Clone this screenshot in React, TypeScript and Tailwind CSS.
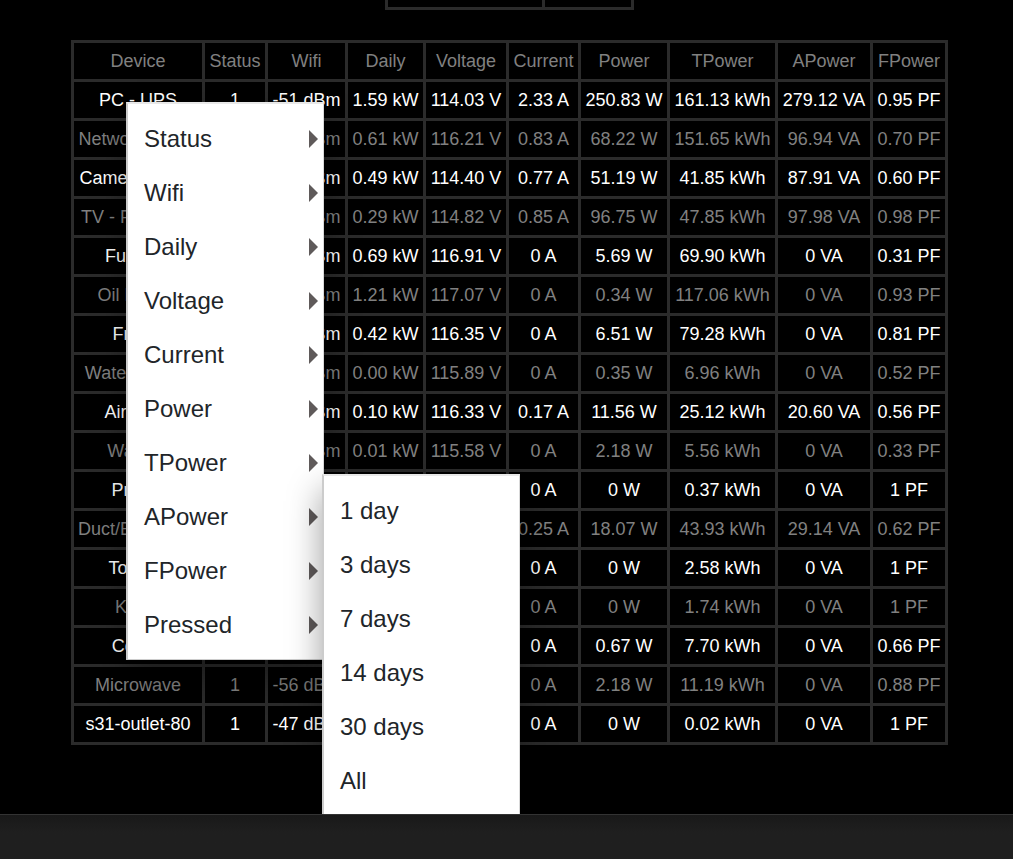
import React from "react";

type Row = string[];

const columns = [
  { name: "Device", width: "w-[131px]" },
  { name: "Status", width: "w-[63px]" },
  { name: "Wifi", width: "w-[80px]" },
  { name: "Daily", width: "w-[78px]" },
  { name: "Voltage", width: "w-[83px]" },
  { name: "Current", width: "w-[72px]" },
  { name: "Power", width: "w-[89px]" },
  { name: "TPower", width: "w-[108px]" },
  { name: "APower", width: "w-[95px]" },
  { name: "FPower", width: "w-[75px]" },
];

const rows: Row[] = [
  ["PC - UPS", "1", "-51 dBm", "1.59 kW", "114.03 V", "2.33 A", "250.83 W", "161.13 kWh", "279.12 VA", "0.95 PF"],
  ["Network - UPS", "", "-56 dBm", "0.61 kW", "116.21 V", "0.83 A", "68.22 W", "151.65 kWh", "96.94 VA", "0.70 PF"],
  ["Camera - UPS", "", "-56 dBm", "0.49 kW", "114.40 V", "0.77 A", "51.19 W", "41.85 kWh", "87.91 VA", "0.60 PF"],
  ["TV - Fire Stick", "", "-56 dBm", "0.29 kW", "114.82 V", "0.85 A", "96.75 W", "47.85 kWh", "97.98 VA", "0.98 PF"],
  ["Furnace", "", "-56 dBm", "0.69 kW", "116.91 V", "0 A", "5.69 W", "69.90 kWh", "0 VA", "0.31 PF"],
  ["Oil Burner", "", "-56 dBm", "1.21 kW", "117.07 V", "0 A", "0.34 W", "117.06 kWh", "0 VA", "0.93 PF"],
  ["Fridge", "", "-56 dBm", "0.42 kW", "116.35 V", "0 A", "6.51 W", "79.28 kWh", "0 VA", "0.81 PF"],
  ["Water Heater", "", "-56 dBm", "0.00 kW", "115.89 V", "0 A", "0.35 W", "6.96 kWh", "0 VA", "0.52 PF"],
  ["Air Filter", "", "-56 dBm", "0.10 kW", "116.33 V", "0.17 A", "11.56 W", "25.12 kWh", "20.60 VA", "0.56 PF"],
  ["Washer", "", "-56 dBm", "0.01 kW", "115.58 V", "0 A", "2.18 W", "5.56 kWh", "0 VA", "0.33 PF"],
  ["Printer", "", "", "", "", "0 A", "0 W", "0.37 kWh", "0 VA", "1 PF"],
  ["Duct/Bathroom", "", "", "", "", "0.25 A", "18.07 W", "43.93 kWh", "29.14 VA", "0.62 PF"],
  ["Toaster", "", "", "", "", "0 A", "0 W", "2.58 kWh", "0 VA", "1 PF"],
  ["Kettle", "", "", "", "", "0 A", "0 W", "1.74 kWh", "0 VA", "1 PF"],
  ["Coffee", "", "", "", "", "0 A", "0.67 W", "7.70 kWh", "0 VA", "0.66 PF"],
  ["Microwave", "1", "-56 dBm", "", "", "0 A", "2.18 W", "11.19 kWh", "0 VA", "0.88 PF"],
  ["s31-outlet-80", "1", "-47 dBm", "", "", "0 A", "0 W", "0.02 kWh", "0 VA", "1 PF"],
];

const metrics = ["Status", "Wifi", "Daily", "Voltage", "Current", "Power", "TPower", "APower", "FPower", "Pressed"];
const ranges = ["1 day", "3 days", "7 days", "14 days", "30 days", "All"];

const panel =
  "absolute w-[198px] border-t-2 border-r border-b border-l-2 border-t-[#e8e8e8] border-r-[#d9d9d9] border-b-[#cccccc] border-l-[#cccccc] bg-white pt-2 text-2xl text-[#212529] shadow-[0_16px_32px_rgba(0,0,0,0.38)]";

function DeviceTable() {
  return (
    <table className="mx-auto w-[877px] table-fixed border-collapse text-center text-lg whitespace-nowrap">
      <colgroup>
        {columns.map((c) => (
          <col key={c.name} className={c.width} />
        ))}
      </colgroup>
      <thead>
        <tr className="h-[39px] text-[#808080]">
          {columns.map((c) => (
            <th key={c.name} scope="col" className="border-3 border-[#2b2b2b] p-0 font-normal">
              {c.name}
            </th>
          ))}
        </tr>
      </thead>
      <tbody>
        {rows.map((row) => (
          <tr key={row[0]} className="h-[39px] text-white even:text-[#808080]">
            {row.map((cell, i) => (
              <td key={columns[i].name} className="border-3 border-[#2b2b2b] p-0">
                {cell}
              </td>
            ))}
          </tr>
        ))}
      </tbody>
    </table>
  );
}

function ContextMenu() {
  return (
    <>
      <div role="menu" aria-label="Chart metric" className={`${panel} top-[102px] left-[126px] pb-[7px]`}>
        {metrics.map((m) => (
          <button
            key={m}
            type="button"
            role="menuitem"
            aria-haspopup="menu"
            className="flex h-[54px] w-full items-center justify-between pr-[5px] pl-4 text-left"
          >
            {m}
            <svg width="9" height="18" viewBox="0 0 9 18" aria-hidden="true">
              <path d="M0 0 L9 9 L0 18 Z" fill="#5f5a5a" />
            </svg>
          </button>
        ))}
      </div>
      <div role="menu" aria-label="Time range" className={`${panel} top-[474px] left-[322px] pb-2`}>
        {ranges.map((r) => (
          <button
            key={r}
            type="button"
            role="menuitem"
            className="flex h-[54px] w-full items-center px-4 text-left"
          >
            {r}
          </button>
        ))}
      </div>
    </>
  );
}

export default function App() {
  return (
    <div className="flex min-h-screen flex-col bg-black font-['Liberation_Sans',Arial,sans-serif]">
      <main className="relative flex-1 overflow-hidden pl-1.5">
        <div className="flex justify-center pb-[30px]">
          <div className="grid h-2.5 grid-cols-[157px_89px] border-r-3 border-b-3 border-[#2b2b2b]">
            <div className="border-l-3 border-[#2b2b2b]" />
            <div className="border-l-3 border-[#2b2b2b]" />
          </div>
        </div>
        <DeviceTable />
        <ContextMenu />
      </main>
      <footer className="h-[45px] border-t border-[#333333] bg-linear-to-b from-[#191919] to-[#1f1f1f] to-40%" />
    </div>
  );
}
